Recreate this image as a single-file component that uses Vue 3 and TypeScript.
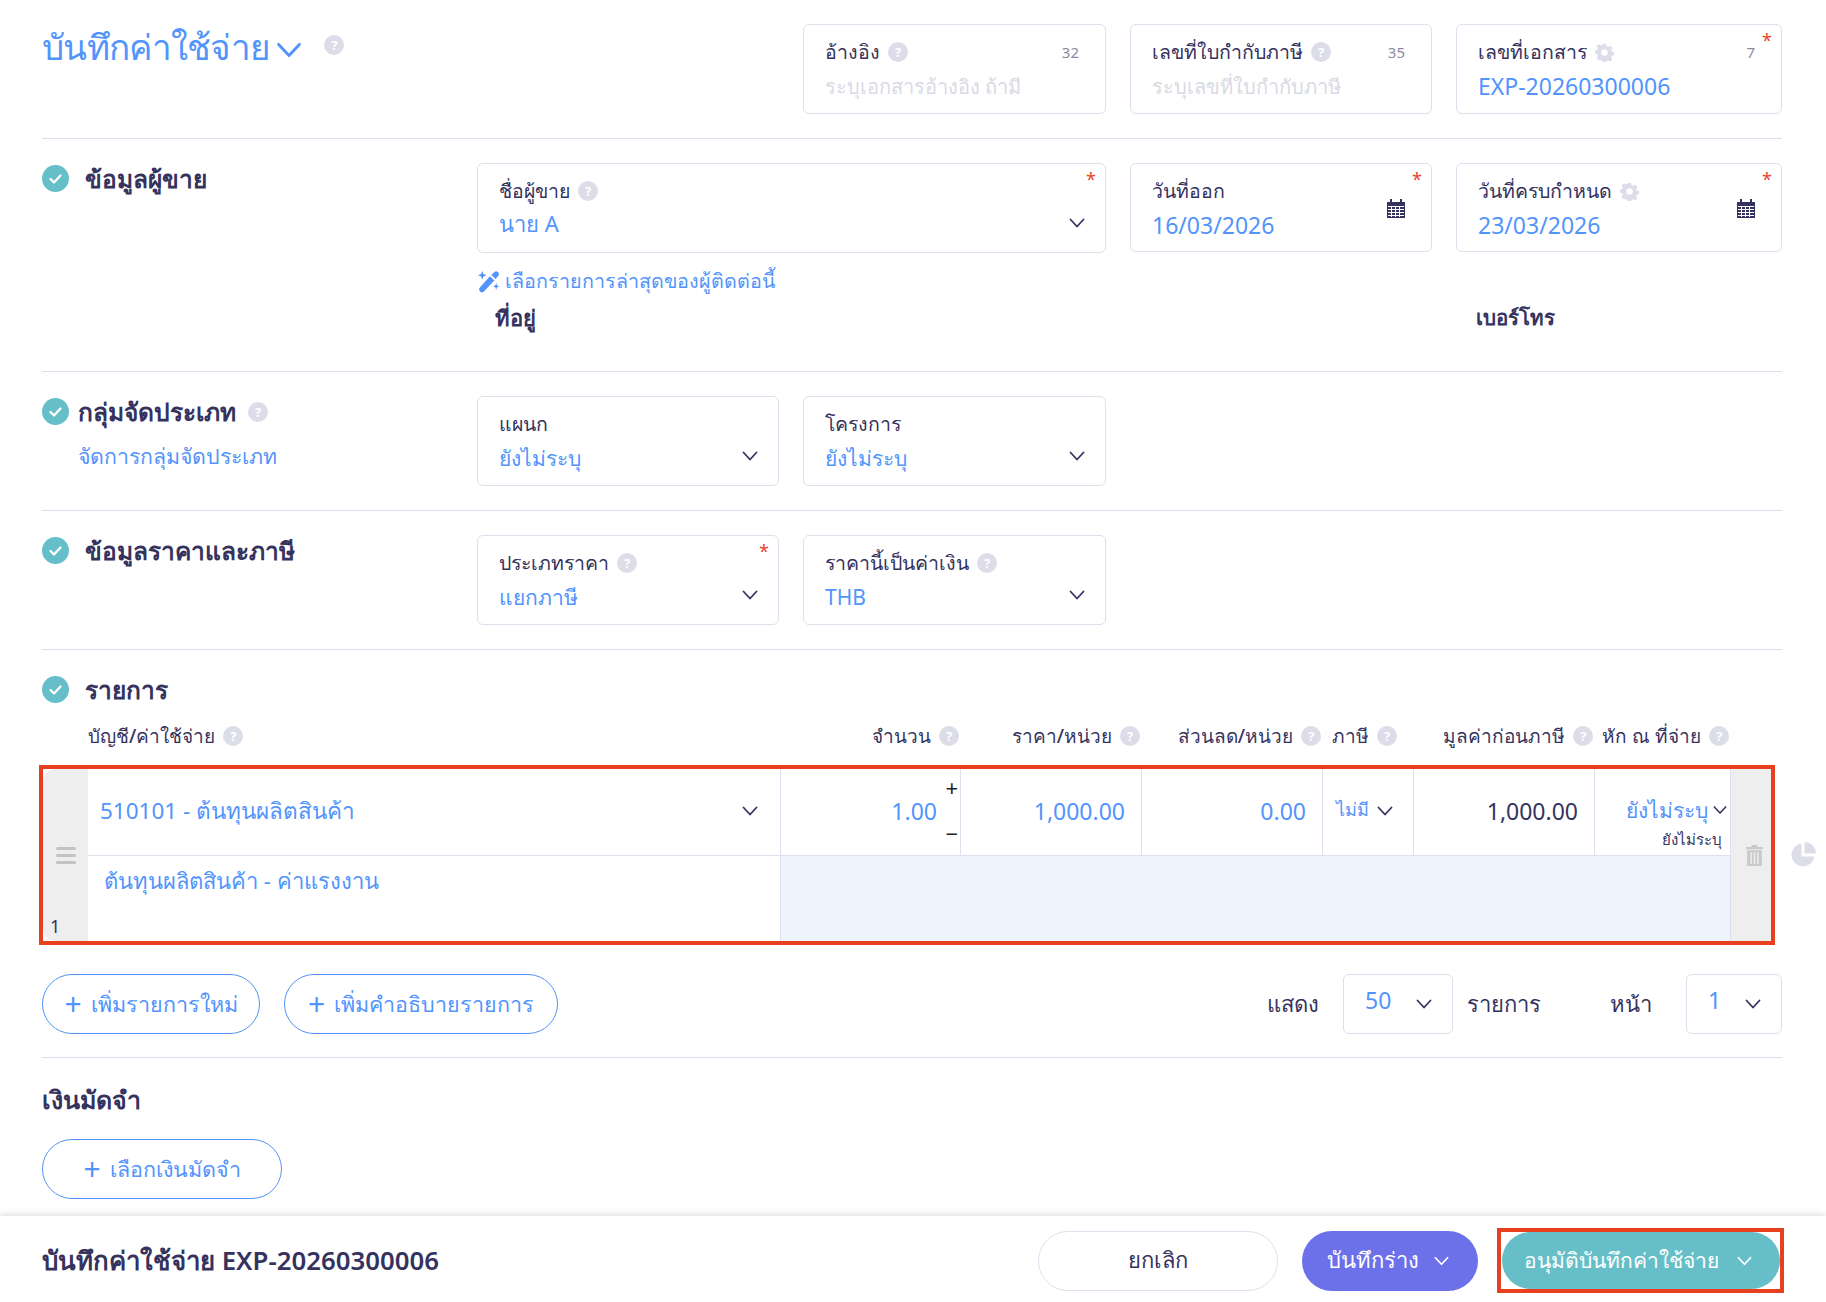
<template>
  <div class="page">
    <svg class="sprite" width="0" height="0">
      <symbol id="chev" viewBox="0 0 16 10"><path d="M1.5 1.5 8 8.500l6.500-7" fill="none" stroke="currentColor" stroke-width="1.800" stroke-linecap="round" stroke-linejoin="round" /></symbol>
      <symbol id="check" viewBox="0 0 27 27"><circle cx="13.500" cy="13.500" r="13.500" fill="#66bfc8" /><path d="M8.500 14l3.500 3.500 6.500-7" fill="none" stroke="#fff" stroke-width="2.300" stroke-linecap="round" stroke-linejoin="round" /></symbol>
      <symbol id="gear" viewBox="0 0 20 20"><path fill="#dcdde9" fill-rule="evenodd" d="M8.300 1h3.400l.5 2.500 1.600.7 2.200-1.400 2.400 2.400-1.400 2.200.7 1.600 2.300.5v3.400l-2.300.5-.7 1.600 1.400 2.200-2.400 2.400-2.200-1.400-1.600.7-.5 2.100H8.300l-.5-2.100-1.600-.7L4 18.100l-2.400-2.400L3 13.500l-.7-1.600L0 11.400V8l2.300-.5.7-1.600L1.600 3.700 4 1.300l2.200 1.400 1.600-.7zM10 6.500a3.500 3.500 0 1 0 0 7 3.500 3.500 0 0 0 0-7z" /></symbol>
      <symbol id="cal" viewBox="0 0 18 19">
        <path fill="#35335e" d="M3 0h2v3H3zM13 0h2v3h-2zM0 3h18v16H0z" />
        <path fill="#fff" d="M1 7h16v1H1zM1 10h16v1H1zM1 13h16v1H1zM1 16h16v1H1zM4 8h1v10H4zM8 8h1v10H8zM12 8h1v10h-1z" />
      </symbol>
    </svg>

    <!-- หัวเอกสาร -->
    <section class="row">
      <div class="title-wrap">
        <h1 class="page-title">บันทึกค่าใช้จ่าย</h1>
        <svg class="title-chev"><use href="#chev" /></svg>
        <span class="help title-help">?</span>
      </div>
      <div class="field col-2">
        <div class="label">อ้างอิง <span class="help">?</span><span class="count">32</span></div>
        <div class="value placeholder">ระบุเอกสารอ้างอิง ถ้ามี</div>
      </div>
      <div class="field col-3">
        <div class="label">เลขที่ใบกำกับภาษี <span class="help">?</span><span class="count">35</span></div>
        <div class="value placeholder">ระบุเลขที่ใบกำกับภาษี</div>
      </div>
      <div class="field col-4">
        <span class="req">*</span>
        <div class="label">เลขที่เอกสาร <svg class="gear"><use href="#gear" /></svg><span class="count">7</span></div>
        <div class="value latin">EXP-20260300006</div>
      </div>
    </section>

    <!-- ข้อมูลผู้ขาย -->
    <section class="row">
      <div class="sec-title">
        <svg class="check"><use href="#check" /></svg>
        <h2>ข้อมูลผู้ขาย</h2>
      </div>
      <div class="field col-span">
        <span class="req">*</span>
        <div class="label">ชื่อผู้ขาย <span class="help">?</span></div>
        <div class="value tight">นาย A</div>
        <svg class="chev"><use href="#chev" /></svg>
      </div>
      <div class="field col-3 short">
        <span class="req">*</span>
        <div class="label">วันที่ออก</div>
        <div class="value latin">16/03/2026</div>
        <svg class="cal"><use href="#cal" /></svg>
      </div>
      <div class="field col-4 short">
        <span class="req">*</span>
        <div class="label">วันที่ครบกำหนด <svg class="gear"><use href="#gear" /></svg></div>
        <div class="value latin">23/03/2026</div>
        <svg class="cal"><use href="#cal" /></svg>
      </div>
      <div class="seller-extra">
        <a class="latest">
          <svg class="wand" viewBox="0 0 24 24">
            <path fill="#5294fb" d="M13.500 6.500l4.500 4.500L7.500 22.300a2.500 2.500 0 0 1-4.300-4.200zM18 2.300a2.500 2.500 0 0 1 4 3.900L19.300 9.500l-4.300-4.300z" />
            <path fill="#5294fb" d="M5.500 1l1.200 3.300L10 5.500 6.700 6.700 5.500 10 4.300 6.700 1 5.500l3.300-1.200zM20 13.500l.9 2.600 2.600.9-2.600.9-.9 2.600-.9-2.600-2.600-.9 2.600-.9z" />
          </svg>
          เลือกรายการล่าสุดของผู้ติดต่อนี้
        </a>
        <div class="extra-labels">
          <span>ที่อยู่</span>
          <span class="phone">เบอร์โทร</span>
        </div>
      </div>
    </section>

    <!-- กลุ่มจัดประเภท -->
    <section class="row">
      <div class="sec-title group">
        <div class="group-top">
          <svg class="check"><use href="#check" /></svg>
          <h2>กลุ่มจัดประเภท</h2>
          <span class="help">?</span>
        </div>
        <a class="manage">จัดการกลุ่มจัดประเภท</a>
      </div>
      <div class="field">
        <div class="label">แผนก</div>
        <div class="value">ยังไม่ระบุ</div>
        <svg class="chev"><use href="#chev" /></svg>
      </div>
      <div class="field">
        <div class="label">โครงการ</div>
        <div class="value">ยังไม่ระบุ</div>
        <svg class="chev"><use href="#chev" /></svg>
      </div>
    </section>

    <!-- ข้อมูลราคาและภาษี -->
    <section class="row">
      <div class="sec-title">
        <svg class="check"><use href="#check" /></svg>
        <h2>ข้อมูลราคาและภาษี</h2>
      </div>
      <div class="field">
        <span class="req">*</span>
        <div class="label">ประเภทราคา <span class="help">?</span></div>
        <div class="value">แยกภาษี</div>
        <svg class="chev"><use href="#chev" /></svg>
      </div>
      <div class="field">
        <div class="label">ราคานี้เป็นค่าเงิน <span class="help">?</span></div>
        <div class="value">THB</div>
        <svg class="chev"><use href="#chev" /></svg>
      </div>
    </section>

    <!-- รายการ -->
    <section class="items">
      <div class="sec-title">
        <svg class="check"><use href="#check" /></svg>
        <h2>รายการ</h2>
      </div>
      <div class="item-grid item-header">
        <div class="th th-account">บัญชี/ค่าใช้จ่าย <span class="help">?</span></div>
        <div v-for="col in headers" :key="col" class="th">{{ col }} <span class="help">?</span></div>
      </div>
      <div class="item-line">
        <div class="item-grid item-table">
          <div class="gutter gutter-left">
            <span class="handle"><i></i><i></i><i></i></span>
            <span class="line-no">1</span>
          </div>
          <div class="cell account">
            <span class="blue">510101 - ต้นทุนผลิตสินค้า</span>
            <svg class="cell-chev"><use href="#chev" /></svg>
          </div>
          <div class="cell num qty">
            <span class="blue">1.00</span>
            <span class="plus">+</span>
            <span class="minus">−</span>
          </div>
          <div class="cell num"><span class="blue">1,000.00</span></div>
          <div class="cell num"><span class="blue">0.00</span></div>
          <div class="cell tax">
            <span class="blue small">ไม่มี</span>
            <svg class="cell-chev"><use href="#chev" /></svg>
          </div>
          <div class="cell num dark">1,000.00</div>
          <div class="cell wht">
            <div class="wht-top">
              <span class="blue">ยังไม่ระบุ</span>
              <svg class="cell-chev"><use href="#chev" /></svg>
            </div>
            <div class="wht-sub">ยังไม่ระบุ</div>
          </div>
          <div class="gutter gutter-right">
            <svg class="trash" viewBox="0 0 16 20">
              <path fill="#c9c9c9" d="M5.500 0h5l.5 2h5v2H0V2h5zM1 5h14v15H1zM4 7v11h1.500V7zM7.200 7v11h1.600V7zM10.500 7v11H12V7z" fill-rule="evenodd" />
            </svg>
          </div>
          <div class="cell desc"><span class="blue">ต้นทุนผลิตสินค้า - ค่าแรงงาน</span></div>
          <div class="cell band"></div>
        </div>
        <svg class="pie" viewBox="0 0 26 26">
          <path fill="#dcdde9" d="M11.500 1.500a11.500 11.500 0 1 0 12.800 13H11.500zM14.500 0v11.500H26A11.500 11.500 0 0 0 14.500 0z" />
        </svg>
      </div>

      <div class="item-actions">
        <button class="btn-outline add-line"><span class="plus-mark">+</span>เพิ่มรายการใหม่</button>
        <button class="btn-outline add-desc"><span class="plus-mark">+</span>เพิ่มคำอธิบายรายการ</button>
        <div class="pager">
          <span>แสดง</span>
          <div class="pager-select wide"><span class="blue">50</span><svg class="cell-chev"><use href="#chev" /></svg></div>
          <span>รายการ</span>
          <span class="page-label">หน้า</span>
          <div class="pager-select"><span class="blue">1</span><svg class="cell-chev"><use href="#chev" /></svg></div>
        </div>
      </div>
    </section>

    <!-- เงินมัดจำ -->
    <section class="deposit">
      <h3>เงินมัดจำ</h3>
      <button class="btn-outline add-deposit"><span class="plus-mark">+</span>เลือกเงินมัดจำ</button>
    </section>

    <footer class="footer">
      <div class="footer-title">บันทึกค่าใช้จ่าย EXP-20260300006</div>
      <button class="btn-cancel">ยกเลิก</button>
      <button class="btn-draft">บันทึกร่าง <svg class="btn-chev"><use href="#chev" /></svg></button>
      <div class="approve-mark">
        <button class="btn-approve">อนุมัติบันทึกค่าใช้จ่าย <svg class="btn-chev"><use href="#chev" /></svg></button>
      </div>
    </footer>
  </div>
</template>

<script setup lang="ts">
const headers: string[] = ['จำนวน', 'ราคา/หน่วย', 'ส่วนลด/หน่วย', 'ภาษี', 'มูลค่าก่อนภาษี', 'หัก ณ ที่จ่าย']
</script>

<style>
html, body {
  margin: 0;
  background: #fff;
}
</style>

<style scoped>
.page {
  height: 1302px;
  width: 1826px;
  overflow: hidden;
  box-sizing: border-box;
  display: flex;
  flex-direction: column;
  padding: 0 44px 0 42px;
  font-family: "Noto Sans", "Inter", sans-serif;
  color: #35335e;
  position: relative;
}
.sprite { position: absolute; }

/* แถวฟอร์มใช้กริดเดียวกัน */
.row {
  display: grid;
  grid-template-columns: 411px 302px 303px 302px 326px;
  column-gap: 24px;
  padding: 24px 0;
  border-bottom: 1px solid #dedfec;
  align-items: start;
}
.row > .title-wrap { grid-column: 1 / 3; }
.col-2 { grid-column: 3; }
.col-3 { grid-column: 4; }
.col-4 { grid-column: 5; }
.col-span { grid-column: 2 / 4; }

.title-wrap { display: flex; align-items: center; height: 40px; margin-top: 3px; }
.page-title {
  margin: 0;
  font-size: 35px;
  letter-spacing: -0.7px;
  font-weight: 500;
  color: #5294fb;
  line-height: 40px;
}
.title-chev { width: 26px; height: 16px; margin-left: 6px; margin-top: 6px; color: #5294fb; }
.title-help { margin-left: 24px; margin-top: -4px; }

.help {
  display: inline-flex;
  width: 20px;
  height: 20px;
  border-radius: 50%;
  background: #dcdde9;
  color: #fff;
  font-size: 13px;
  font-weight: 700;
  line-height: 20px;
  align-items: center;
  justify-content: center;
  flex: none;
  margin-left: 3px;
}
.title-wrap .title-help { margin-left: 22px; }
.gear { width: 19px; height: 19px; margin-left: 3px; }

.field {
  position: relative;
  box-sizing: border-box;
  height: 90px;
  border: 1px solid #dedfec;
  border-radius: 6px;
  padding: 14px 20px 0 21px;
}
.field.short { height: 89px; }
.label {
  display: flex;
  align-items: center;
  height: 26px;
  font-size: 19.5px;
  font-weight: 500;
  white-space: pre;
}
.count {
  margin-left: auto;
  margin-right: 6px;
  font-size: 15px;
  font-weight: 400;
  color: #8a8a9e;
}
.value {
  margin-top: 7px;
  font-size: 21px;
  line-height: 28px;
  color: #5294fb;
  white-space: nowrap;
}
.value.latin { font-size: 23px; }
.value.tight { margin-top: 5px; font-size: 22px; }
.value.placeholder { color: #d9dae3; font-size: 20px; margin-top: 8px; }
.req {
  position: absolute;
  top: 3px;
  right: 9px;
  color: #e8452a;
  font-size: 18px;
}
.chev {
  position: absolute;
  right: 20px;
  top: 54px;
  width: 16px;
  height: 10px;
  color: #35335e;
}
.cal {
  position: absolute;
  right: 26px;
  top: 35px;
  width: 18px;
  height: 19px;
}

.sec-title { display: flex; align-items: center; gap: 16px; height: 27px; margin-top: 2px; }
.sec-title h2 { margin: 0; font-size: 24.5px; font-weight: 600; line-height: 27px; }
.check { width: 27px; height: 27px; flex: none; }
.group { display: block; height: auto; }
.group-top { display: flex; align-items: center; gap: 9px; height: 27px; }
.manage { display: block; margin: 15px 0 0 36px; font-size: 21.3px; color: #5294fb; }

.seller-extra { grid-column: 2 / 6; margin-top: 14px; height: 80px; }
.latest { display: flex; align-items: center; gap: 5px; font-size: 19.7px; color: #5294fb; height: 28px; }
.wand { width: 23px; height: 23px; }
.extra-labels {
  display: flex;
  padding-left: 18px;
  margin-top: 6px;
  font-size: 22px;
  font-weight: 600;
}
.phone { margin-left: auto; margin-right: 227px; font-size: 20.5px; }

/* รายการ */
.items { padding-top: 24px; padding-bottom: 23px; border-bottom: 1px solid #dedfec; }
.item-grid {
  display: grid;
  grid-template-columns: 45px 693px 180px 181px 181px 91px 181px 136px 40px;
}
.item-header { margin-top: 18px; margin-left: 1px; height: 30px; align-items: center; }
.th {
  display: flex;
  justify-content: flex-end;
  align-items: center;
  font-size: 19px;
  font-weight: 500;
  white-space: pre;
  padding-right: 2px;
}
.th-account { grid-column: 2; justify-content: flex-start; }
.th:nth-child(5) { padding-right: 17px; }

.item-line { display: flex; align-items: center; margin-left: -3px; margin-top: 14px; }
.item-table {
  box-sizing: border-box;
  width: 1736px;
  height: 180px;
  border: 4px solid #e8401f;
  grid-template-rows: 87px 85px;
  flex: none;
}
.gutter {
  grid-row: 1 / 3;
  background: #eeeeee;
  position: relative;
  display: flex;
  align-items: center;
  justify-content: center;
}
.gutter-left { grid-column: 1; border-top-left-radius: 12px; border-bottom-left-radius: 12px; }
.gutter-right { grid-column: 9; }
.handle { display: flex; flex-direction: column; gap: 4px; }
.handle i { display: block; width: 20px; height: 3px; background: #c3c3c3; border-radius: 2px; }
.line-no { position: absolute; left: 7px; bottom: 3px; font-size: 18px; }
.trash { width: 17px; height: 21px; margin-left: 6px; }
.cell {
  box-sizing: border-box;
  min-width: 0;
  border-right: 1px solid #dedfec;
  border-bottom: 1px solid #dedfec;
  display: flex;
  align-items: center;
  font-size: 23px;
  position: relative;
  white-space: nowrap;
}
.blue { color: #5294fb; }
.small { font-size: 18px; padding-bottom: 4px; }
.account { padding: 0 22px 2px 12px; justify-content: space-between; font-size: 22.5px; }
.cell-chev { width: 16px; height: 10px; color: #35335e; flex: none; }
.num { justify-content: flex-end; padding: 0 16px 3px 0; }
.qty { padding-right: 23px; }
.plus { position: absolute; right: 2px; top: 3px; font-size: 22px; color: #222; }
.minus { position: absolute; right: 2px; bottom: 7px; font-size: 22px; color: #222; }
.tax { padding: 0 0 2px 13px; gap: 8px; }
.dark { color: #35335e; }
.wht {
  flex-direction: column;
  align-items: flex-end;
  justify-content: flex-start;
  padding-right: 3px;
  padding-top: 27px;
}
.wht-top { display: flex; align-items: center; gap: 5px; height: 28px; font-size: 21px; }
.wht-top .cell-chev { width: 14px; }
.wht-sub { font-size: 15px; line-height: 20px; color: #35335e; padding-right: 5px; margin-top: 5px; }
.desc { grid-column: 2; grid-row: 2; border-bottom: 0; align-items: flex-start; padding: 8px 0 0 16px; font-size: 22px; }
.band { grid-column: 3 / 9; grid-row: 2; background: #edf4fe; border-bottom: 0; }
.pie { width: 26px; height: 26px; margin-left: 15px; flex: none; }

.item-actions { display: flex; align-items: center; gap: 24px; margin-top: 29px; }
.btn-outline {
  height: 60px;
  padding: 0 0 1px;
  border: 1px solid #5294fb;
  border-radius: 30px;
  background: #fff;
  color: #5294fb;
  font-family: inherit;
  font-size: 21.5px;
  display: flex;
  align-items: center;
  justify-content: center;
}
.add-line { width: 218px; }
.add-desc { width: 274px; }
.add-deposit { width: 240px; }
.plus-mark { font-size: 30px; font-weight: 400; line-height: 28px; margin-right: 9px; }
.pager { margin-left: auto; display: flex; align-items: center; font-size: 22px; }
.pager-select {
  box-sizing: border-box;
  width: 96px;
  height: 60px;
  border: 1px solid #dedfec;
  border-radius: 6px;
  display: flex;
  align-items: center;
  justify-content: space-between;
  padding: 0 20px 0 21px;
}
.pager-select .blue { padding-bottom: 8px; font-size: 23px; }
.pager-select.wide { width: 110px; margin: 0 14px 0 24px; }
.page-label { margin: 0 34px 0 69px; }

.deposit { padding-top: 25px; }
.deposit h3 { margin: 0 0 24px; font-size: 25px; font-weight: 600; line-height: 32px; }

.footer {
  margin: auto -44px 0 -42px;
  height: 86px;
  box-sizing: border-box;
  box-shadow: 0 -2px 6px rgba(0, 0, 0, 0.12);
  display: flex;
  align-items: center;
  padding: 3px 42px 0 42px;
  background: #fff;
}
.footer-title { font-size: 25.8px; font-weight: 600; margin-right: auto; }
.btn-cancel, .btn-draft, .btn-approve {
  height: 60px;
  border-radius: 30px;
  font-family: inherit;
  font-size: 22px;
  display: flex;
  align-items: center;
  justify-content: center;
}
.btn-cancel { width: 240px; background: #fff; border: 1px solid #dedfec; color: #35335e; }
.btn-draft { width: 176px; margin: 0 19px 0 24px; padding: 0 5px 0 0; background: #6c70e9; color: #fff; border: 0; gap: 15px; }
.approve-mark {
  border: 4px solid #e8401f;
  height: 65px;
  box-sizing: border-box;
  width: 287px;
  display: flex;
  align-items: center;
  justify-content: center;
}
.btn-approve { width: 278px; height: 57px; padding: 0 6px 0 0; background: #66bfc8; color: #fff; border: 0; gap: 18px; font-size: 21px; }
.btn-chev { width: 15px; height: 10px; color: #fff; }
</style>
